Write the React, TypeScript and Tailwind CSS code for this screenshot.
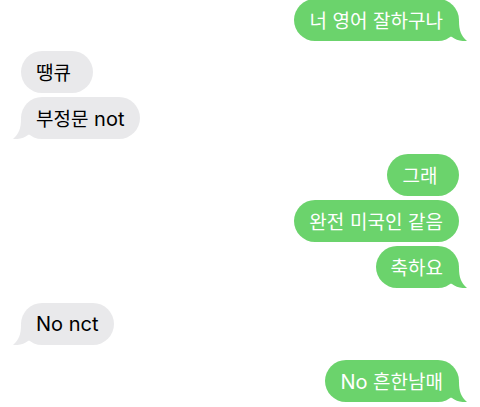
import React from "react";

const GREEN = "bg-[#6bd36c]";
const GRAY = "bg-[#e9e9eb]";

function Runs({ text }: { text: string }) {
  const parts = text.split(/([\uAC00-\uD7A3]+)/).filter((p) => p.length > 0);
  return (
    <>
      {parts.map((p, i) =>
        /[\uAC00-\uD7A3]/.test(p) ? (
          <span key={i} className="text-[19px] [font-family:'Noto_Sans_CJK_KR',sans-serif]">
            {p}
          </span>
        ) : (
          <span key={i} className="text-[20px] [font-family:Inter,sans-serif]">
            {p}
          </span>
        )
      )}
    </>
  );
}

function TailRight({ color }: { color: string }) {
  return (
    <svg className="absolute bottom-0 right-[-8px]" width="22" height="20" viewBox="0 0 22 20">
      <path d="M0 0 H14 C14 9 16 15 22 20 C16 20.5 11 19 7 16 C5 15 2 14 0 14 Z" fill={color} />
    </svg>
  );
}

function TailLeft({ color }: { color: string }) {
  return (
    <svg className="absolute bottom-0 left-[-8px]" width="22" height="20" viewBox="0 0 22 20">
      <path d="M22 0 H8 C8 9 6 15 0 20 C6 20.5 11 19 15 16 C17 15 20 14 22 14 Z" fill={color} />
    </svg>
  );
}

function Bubble({
  side,
  text,
  tail,
  mt,
}: {
  side: "l" | "r";
  text: string;
  tail?: boolean;
  mt: string;
}) {
  const isR = side === "r";
  return (
    <div className={`flex ${isR ? "justify-end pr-[21px]" : "justify-start pl-[21px]"} ${mt}`}>
      <div
        className={`relative flex h-[42px] items-center rounded-[21px] pl-[15px] pr-[16px] whitespace-pre leading-none ${
          isR ? `${GREEN} text-white` : `${GRAY} text-black`
        }`}
      >
        {tail && (isR ? <TailRight color="#6bd36c" /> : <TailLeft color="#e9e9eb" />)}
        <span className="relative">
          <Runs text={text} />
        </span>
      </div>
    </div>
  );
}

export default function App() {
  return (
    <div className="w-[480px] h-[407px] overflow-hidden bg-white">
      <div className="flex flex-col">
        <Bubble side="r" text="너 영어 잘하구나" tail mt="-mt-px" />
        <Bubble side="l" text="땡큐 " mt="mt-[10px]" />
        <Bubble side="l" text="부정문 not" tail mt="mt-[4px]" />
        <Bubble side="r" text="그래 " mt="mt-[15px]" />
        <Bubble side="r" text="완전 미국인 같음" mt="mt-[4px]" />
        <Bubble side="r" text="축하요" tail mt="mt-[4px]" />
        <Bubble side="l" text="No nct" tail mt="mt-[15px]" />
        <Bubble side="r" text="No 흔한남매" tail mt="mt-[15px]" />
      </div>
    </div>
  );
}
